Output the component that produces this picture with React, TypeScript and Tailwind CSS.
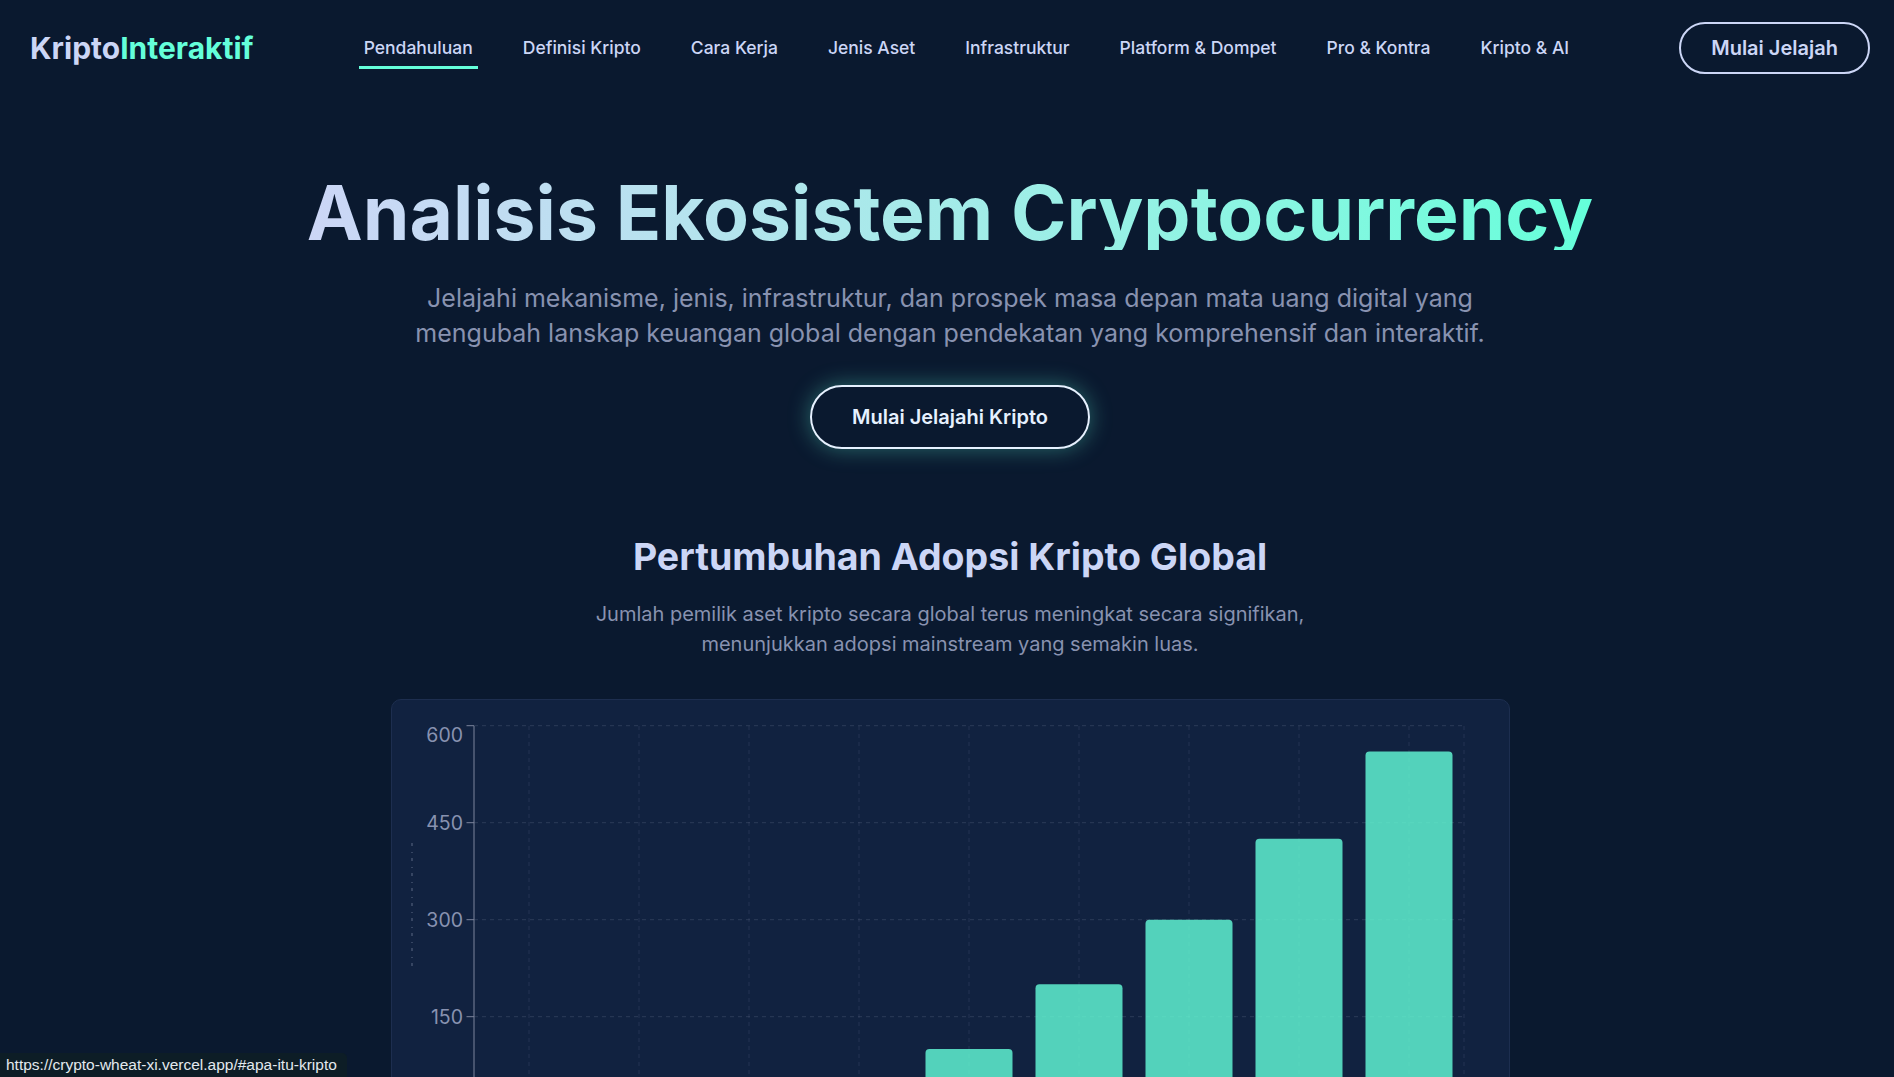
import React from "react";

const navItems = [
  "Pendahuluan",
  "Definisi Kripto",
  "Cara Kerja",
  "Jenis Aset",
  "Infrastruktur",
  "Platform & Dompet",
  "Pro & Kontra",
  "Kripto & AI",
];

const values = [5, 12, 25, 45, 100, 200, 300, 425, 560];
const years = ["2016", "2017", "2018", "2019", "2020", "2021", "2022", "2023", "2024"];

function Chart() {
  const axisX = 82;
  const right = 1072;
  const top = 26;
  const zero = 413.7;
  const per = 97 / 150;
  const yOf = (v: number) => zero - v * per;
  const cx = (i: number) => 137 + i * 110;
  const ticks = [600, 450, 300, 150, 0];
  return (
    <svg width="1117" height="478" className="block">
      {ticks.map((t) => (
        <line
          key={"h" + t}
          x1={axisX}
          x2={right}
          y1={yOf(t)}
          y2={yOf(t)}
          stroke="#8892b0"
          strokeOpacity="0.22"
          strokeDasharray="4 4"
        />
      ))}
      {values.map((_, i) => (
        <line
          key={"v" + i}
          x1={cx(i)}
          x2={cx(i)}
          y1={top}
          y2={zero}
          stroke="#8892b0"
          strokeOpacity="0.16"
          strokeDasharray="4 4"
        />
      ))}
      <line x1={right} x2={right} y1={top} y2={zero} stroke="#8892b0" strokeOpacity="0.16" strokeDasharray="4 4" />
      {values.map((v, i) => {
        const y = yOf(v);
        const h = zero - y;
        const x = cx(i) - 43.5;
        const r = 4;
        const d = `M${x},${zero} L${x},${y + r} Q${x},${y} ${x + r},${y} L${x + 87 - r},${y} Q${x + 87},${y} ${x + 87},${y + r} L${x + 87},${zero} Z`;
        return h > 0 ? <path key={"b" + i} d={d} fill="#64ffda" fillOpacity="0.8" /> : null;
      })}
      <line x1={axisX} x2={axisX} y1={top} y2={zero + 8} stroke="#7c849c" strokeWidth="1" />
      {ticks.map((t) => (
        <g key={"t" + t}>
          <line x1={axisX - 7.5} x2={axisX} y1={yOf(t)} y2={yOf(t)} stroke="#7c849c" />
          <text
            x={71}
            y={t === 600 ? 35 : yOf(t)}
            textAnchor="end"
            dominantBaseline="central"
            fontFamily="Inter, sans-serif"
            fontSize="19.5"
            fill="#8892b0"
          >
            {t}
          </text>
        </g>
      ))}
      <line x1="20" x2="20" y1="143" y2="267" stroke="#aab2c8" strokeOpacity="0.5" strokeDasharray="3 6 1 5" />
      {years.map((y, i) => (
        <text
          key={"x" + i}
          x={cx(i)}
          y={zero + 28}
          textAnchor="middle"
          fontFamily="Inter, sans-serif"
          fontSize="18"
          fill="#8892b0"
        >
          {y}
        </text>
      ))}
    </svg>
  );
}

export default function App() {
  return (
    <div className="min-h-screen bg-[#0a192f] font-['Inter',sans-serif] pb-24">
      <header className="h-[96px] flex items-center justify-between pl-[30px] pr-[24px]">
        <a href="#" className="text-3xl font-bold leading-9">
          <span className="text-[#ccd6f6]">Kripto</span>
          <span className="text-[#64ffda]">Interaktif</span>
        </a>
        <nav className="flex items-center gap-[40px]">
          {navItems.map((item, i) => (
            <a
              key={item}
              href="#"
              className="relative px-[5px] text-[17.5px] leading-7 font-medium text-[#ccd6f6]"
            >
              {item}
              {i === 0 && (
                <span className="absolute left-0 right-0 -bottom-[7px] h-[3px] bg-[#64ffda]" />
              )}
            </a>
          ))}
        </nav>
        <button className="rounded-full border-2 border-[#ccd6f6] px-[30px] py-2.5 text-xl leading-7 font-semibold text-[#ccd6f6]">
          Mulai Jelajah
        </button>
      </header>

      <main className="pl-[6px] flex flex-col items-center">
        <h1 className="mt-[79px] text-[75px] leading-none font-bold bg-linear-to-r from-[#ccd6f6] to-[#64ffda] bg-clip-text text-transparent">
          Analisis Ekosistem Cryptocurrency
        </h1>
        <p className="mt-[31px] max-w-[1100px] text-center text-[25px] leading-[35px] text-[#8892b0]">
          Jelajahi mekanisme, jenis, infrastruktur, dan prospek masa depan mata uang digital yang
          mengubah lanskap keuangan global dengan pendekatan yang komprehensif dan interaktif.
        </p>
        <button className="mt-[34px] rounded-full border-2 border-[#e6f1ff] px-10 py-4 text-xl leading-7 font-semibold text-[#e6f1ff] shadow-[0_0_22px_rgba(100,255,218,0.35)]">
          Mulai Jelajahi Kripto
        </button>

        <h2 className="mt-[88px] text-[37.5px] leading-10 font-bold text-[#ccd6f6]">
          Pertumbuhan Adopsi Kripto Global
        </h2>
        <p className="mt-[22px] max-w-3xl text-center text-xl leading-[30px] text-[#8892b0]">
          Jumlah pemilik aset kripto secara global terus meningkat secara signifikan, menunjukkan
          adopsi mainstream yang semakin luas.
        </p>

        <div className="mt-10 w-[1119px] rounded-[10px] border border-[#1d2e4f] bg-[#112240] overflow-hidden">
          <Chart />
        </div>
      </main>

      <div className="fixed bottom-0 left-0 h-[24px] w-[347px] rounded-tr-[5px] bg-[#0d1d26] pl-[6px] font-['Liberation_Sans',sans-serif] text-[15.5px] leading-[24px] text-[#e3e9ee]">
        https://crypto-wheat-xi.vercel.app/#apa-itu-kripto
      </div>
    </div>
  );
}
